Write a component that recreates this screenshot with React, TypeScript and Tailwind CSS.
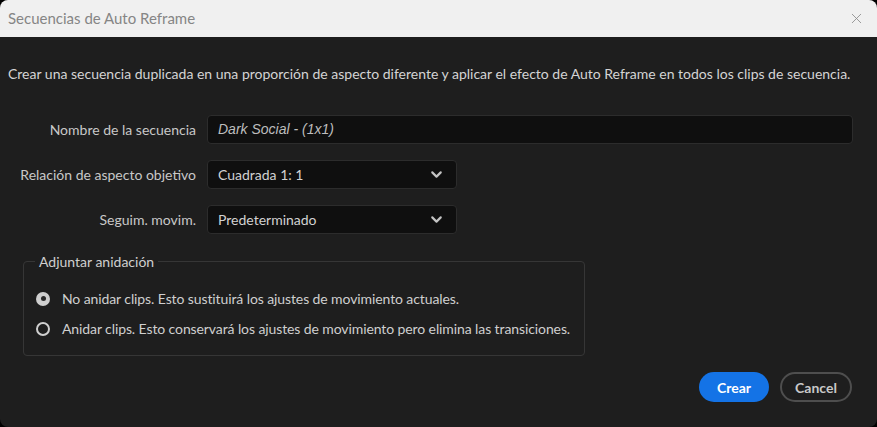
import React, {useState} from 'react';
import {X, ChevronDown} from "lucide-react";

const font = {fontFamily: 'Lato, "Noto Sans", sans-serif'};

function Field(props: {label: string, children: React.ReactNode}) {
    return (
        <div className="flex items-center">
            <div className="w-[207px] pr-[11px] text-right text-[14px] text-[#c8c8c8]">{props.label}</div>
            {props.children}
        </div>
    );
}

function Select(props: {value: string}) {
    return (
        <div className="flex items-center justify-between w-[250px] h-[29px] pl-[10px] pr-[11px] rounded-[4px] border border-[#2c2c2c] bg-[#0f0f0f] text-[14px] text-[#d2d2d2]">
            <span>{props.value}</span>
            <ChevronDown size={17} strokeWidth={3} className="text-[#c4c4c4]"/>
        </div>
    );
}

function Radio(props: {checked: boolean, label: string, onClick: () => void}) {
    return (
        <button type="button" onClick={props.onClick}
                className="flex items-center gap-[12px] whitespace-nowrap text-left text-[14px] tracking-[-0.1px] text-[#cfcfcf]">
            {props.checked ?
                <span className="flex items-center justify-center w-[14px] h-[14px] rounded-full bg-[#cfcfcf]">
                    <span className="w-[5px] h-[5px] rounded-full bg-[#2a2a2a]"/>
                </span> :
                <span className="w-[14px] h-[14px] rounded-full border-2 border-[#cfcfcf]"/>
            }
            <span>{props.label}</span>
        </button>
    );
}

export default function App() {
    const [nest, setNest] = useState(false);

    return (
        <div style={font} className="w-[877px] h-[427px] bg-black">
            <div className="flex flex-col w-full h-full rounded-[8px] overflow-hidden bg-[#1e1e1e]">
                <div className="flex items-center justify-between h-[37px] pl-[8px] pr-[12px] bg-[#f0f0f0]">
                    <span className="text-[15px] text-[#858585]">Secuencias de Auto Reframe</span>
                    <X size={17} strokeWidth={1.2} className="text-[#8a8a8a]"/>
                </div>

                <p className="mt-[26px] pl-[8px] text-[14px] text-[#d4d4d4]">
                    Crear una secuencia duplicada en una proporción de aspecto diferente y aplicar el efecto de Auto Reframe en todos los clips de secuencia.
                </p>

                <div className="flex flex-col gap-[16px] mt-[31px]">
                    <Field label="Nombre de la secuencia">
                        <div className="flex items-center w-[646px] h-[29px] pl-[10px] rounded-[4px] border border-[#2c2c2c] bg-[#0f0f0f] text-[14px] italic text-[#bdbdbd]"
                             style={{fontFamily: '"Liberation Sans", Arial, sans-serif'}}>
                            Dark Social - (1x1)
                        </div>
                    </Field>
                    <Field label="Relación de aspecto objetivo">
                        <Select value="Cuadrada 1: 1"/>
                    </Field>
                    <Field label="Seguim. movim.">
                        <Select value="Predeterminado"/>
                    </Field>
                </div>

                <fieldset className="mt-[17px] ml-[23px] w-[562px] min-w-0 h-[105px] rounded-[4px] border border-[#363636] px-[11px]">
                    <legend className="px-[4px] text-[14px] text-[#cfcfcf]">Adjuntar anidación</legend>
                    <div className="flex flex-col gap-[9px] mt-[16px] pl-[1px]">
                        <Radio checked={!nest} onClick={() => setNest(false)}
                               label="No anidar clips. Esto sustituirá los ajustes de movimiento actuales."/>
                        <Radio checked={nest} onClick={() => setNest(true)}
                               label="Anidar clips. Esto conservará los ajustes de movimiento pero elimina las transiciones."/>
                    </div>
                </fieldset>

                <div className="flex justify-end gap-[11px] mt-[16px] pr-[25px]">
                    <button type="button" className="w-[70px] h-[30px] rounded-full bg-[#1473e6] text-[14px] font-bold text-white">
                        Crear
                    </button>
                    <button type="button" className="w-[72px] h-[30px] rounded-full border-2 border-[#4e4e4e] text-[14px] font-bold text-[#c8c8c8]">
                        Cancel
                    </button>
                </div>
            </div>
        </div>
    );
}
